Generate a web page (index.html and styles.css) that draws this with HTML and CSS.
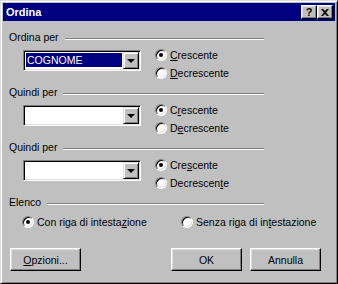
FILE: index.html
```html
<!DOCTYPE html>
<html lang="it">
<head>
    <meta charset="UTF-8">
    <title>Ordina</title>
    <link rel="stylesheet" href="styles.css">
</head>
<body>
    <div class="window">
        <div class="titlebar">
            <span class="title">Ordina</span>
            <div class="title-buttons">
                <div class="tbtn help">?</div>
                <div class="tbtn close">
                    <svg width="8" height="7" viewBox="0 0 8 7">
                        <path d="M0 0h2l2 2 2-2h2L5 3.5 8 7H6L4 5 2 7H0l3-3.5z" fill="#000"/>
                    </svg>
                </div>
            </div>
        </div>

        <div class="content">
            <!-- Ordina per -->
            <div class="group">
                <div class="group-head"><span>Ordina per</span><div class="rule"></div></div>
                <div class="group-body">
                    <div class="combo">
                        <div class="combo-value selected">COGNOME</div>
                        <div class="combo-btn"></div>
                    </div>
                    <div class="radios">
                        <div class="radio-row"><span class="radio checked"></span><span><u>C</u>rescente</span></div>
                        <div class="radio-row"><span class="radio"></span><span><u>D</u>ecrescente</span></div>
                    </div>
                </div>
            </div>

            <!-- Quindi per -->
            <div class="group">
                <div class="group-head"><span>Quindi per</span><div class="rule"></div></div>
                <div class="group-body">
                    <div class="combo">
                        <div class="combo-value"></div>
                        <div class="combo-btn"></div>
                    </div>
                    <div class="radios">
                        <div class="radio-row"><span class="radio checked"></span><span>C<u>r</u>escente</span></div>
                        <div class="radio-row"><span class="radio"></span><span>D<u>e</u>crescente</span></div>
                    </div>
                </div>
            </div>

            <div class="group">
                <div class="group-head"><span>Quindi per</span><div class="rule"></div></div>
                <div class="group-body">
                    <div class="combo">
                        <div class="combo-value"></div>
                        <div class="combo-btn"></div>
                    </div>
                    <div class="radios">
                        <div class="radio-row"><span class="radio checked"></span><span>Cre<u>s</u>cente</span></div>
                        <div class="radio-row"><span class="radio"></span><span>Decrescen<u>t</u>e</span></div>
                    </div>
                </div>
            </div>

            <!-- Elenco -->
            <div class="group-head"><span>Elenco</span><div class="rule"></div></div>
            <div class="list-body">
                <div class="radio-row first"><span class="radio checked"></span><span>Con riga di intesta<u>z</u>ione</span></div>
                <div class="radio-row"><span class="radio"></span><span>Senza riga di in<u>t</u>estazione</span></div>
            </div>

            <div class="actions">
                <div class="button"><span><u>O</u>pzioni...</span></div>
                <div class="button ok">OK</div>
                <div class="button cancel">Annulla</div>
            </div>
        </div>
    </div>
</body>
</html>
```

FILE: styles.css
```css
body {
    margin: 0;
    background: #c0c0c0;
    font-family: "Liberation Sans", Arial, sans-serif;
    font-size: 10.5px;
    color: #000;
}

.window {
    box-sizing: border-box;
    width: 338px;
    height: 284px;
    padding: 2px;
    background: #c0c0c0;
    border: 1px solid;
    border-color: #dfdfdf #000 #000 #dfdfdf;
    box-shadow: inset 1px 1px #fff, inset -1px -1px #808080;
    display: flex;
    flex-direction: column;
}

/* Title bar */
.titlebar {
    height: 18px;
    background: #000080;
    color: #fff;
    display: flex;
    align-items: center;
    justify-content: space-between;
    padding: 0 2px 0 3px;
}

.title {
    font-weight: bold;
    font-size: 11px;
}

.title-buttons {
    display: flex;
}

.tbtn {
    box-sizing: border-box;
    width: 16px;
    height: 14px;
    background: #c0c0c0;
    border: 1px solid;
    border-color: #fff #000 #000 #fff;
    box-shadow: inset -1px -1px #808080, inset 1px 1px #dfdfdf;
    display: flex;
    align-items: center;
    justify-content: center;
    color: #000;
    font-weight: bold;
    font-size: 11px;
    line-height: 12px;
}

/* Content */
.content {
    padding: 10px 6px 0;
}

.group {
    margin-bottom: 4px;
}

.group-head {
    display: flex;
    width: 255px;
    height: 13px;
    line-height: 13px;
}

.rule {
    flex: 1;
    height: 0;
    margin-top: 7px;
    margin-left: 6px;
    border-top: 1px solid #808080;
    border-bottom: 1px solid #fff;
}

.group-body {
    display: flex;
    height: 36px;
    margin-top: 2px;
    padding-left: 14px;
}

/* Combo box */
.combo {
    box-sizing: border-box;
    width: 118px;
    height: 21px;
    margin-top: 4px;
    padding: 1px;
    background: #fff;
    border: 1px solid;
    border-color: #808080 #fff #fff #808080;
    box-shadow: inset 1px 1px #000, inset -1px -1px #dfdfdf;
    display: flex;
}

.combo-value {
    flex: 1;
    height: 14px;
    line-height: 14px;
    margin: 1px 1px 0;
    padding-left: 1px;
}

.combo-value.selected {
    background: #000080;
    color: #fff;
}

.combo-btn {
    box-sizing: border-box;
    width: 16px;
    height: 17px;
    background: #c0c0c0;
    border: 1px solid;
    border-color: #dfdfdf #000 #000 #dfdfdf;
    box-shadow: inset 1px 1px #fff, inset -1px -1px #808080;
    display: flex;
    align-items: center;
    justify-content: center;
}

.combo-btn::before {
    content: "";
    width: 0;
    height: 0;
    border-left: 4px solid transparent;
    border-right: 4px solid transparent;
    border-top: 4px solid #000;
    margin-top: 1px;
}

/* Radio buttons */
.radios {
    margin-left: 14px;
    display: flex;
    flex-direction: column;
}

.radio-row {
    height: 18px;
    display: flex;
    align-items: center;
    gap: 3px;
}

.radio {
    box-sizing: border-box;
    width: 12px;
    height: 12px;
    border-radius: 50%;
    background: #fff;
    border: 1px solid;
    border-color: #808080 #fff #fff #808080;
    box-shadow: inset 1px 1px #000, inset -1px -1px #dfdfdf;
    display: flex;
    align-items: center;
    justify-content: center;
}

.radio.checked::after {
    content: "";
    width: 4px;
    height: 4px;
    border-radius: 50%;
    background: #000;
}

.list-body {
    display: flex;
    margin-top: 4px;
    padding-left: 13px;
}

.radio-row.first {
    width: 159px;
}

/* Buttons */
.actions {
    display: flex;
    margin-top: 17px;
    padding-left: 1px;
}

.button {
    box-sizing: border-box;
    width: 71px;
    height: 23px;
    background: #c0c0c0;
    border: 1px solid;
    border-color: #fff #000 #000 #fff;
    box-shadow: inset -1px -1px #808080, inset 1px 1px #dfdfdf;
    display: flex;
    align-items: center;
    justify-content: center;
}

.button.ok {
    margin-left: 90px;
}

.button.cancel {
    margin-left: 8px;
}
```
